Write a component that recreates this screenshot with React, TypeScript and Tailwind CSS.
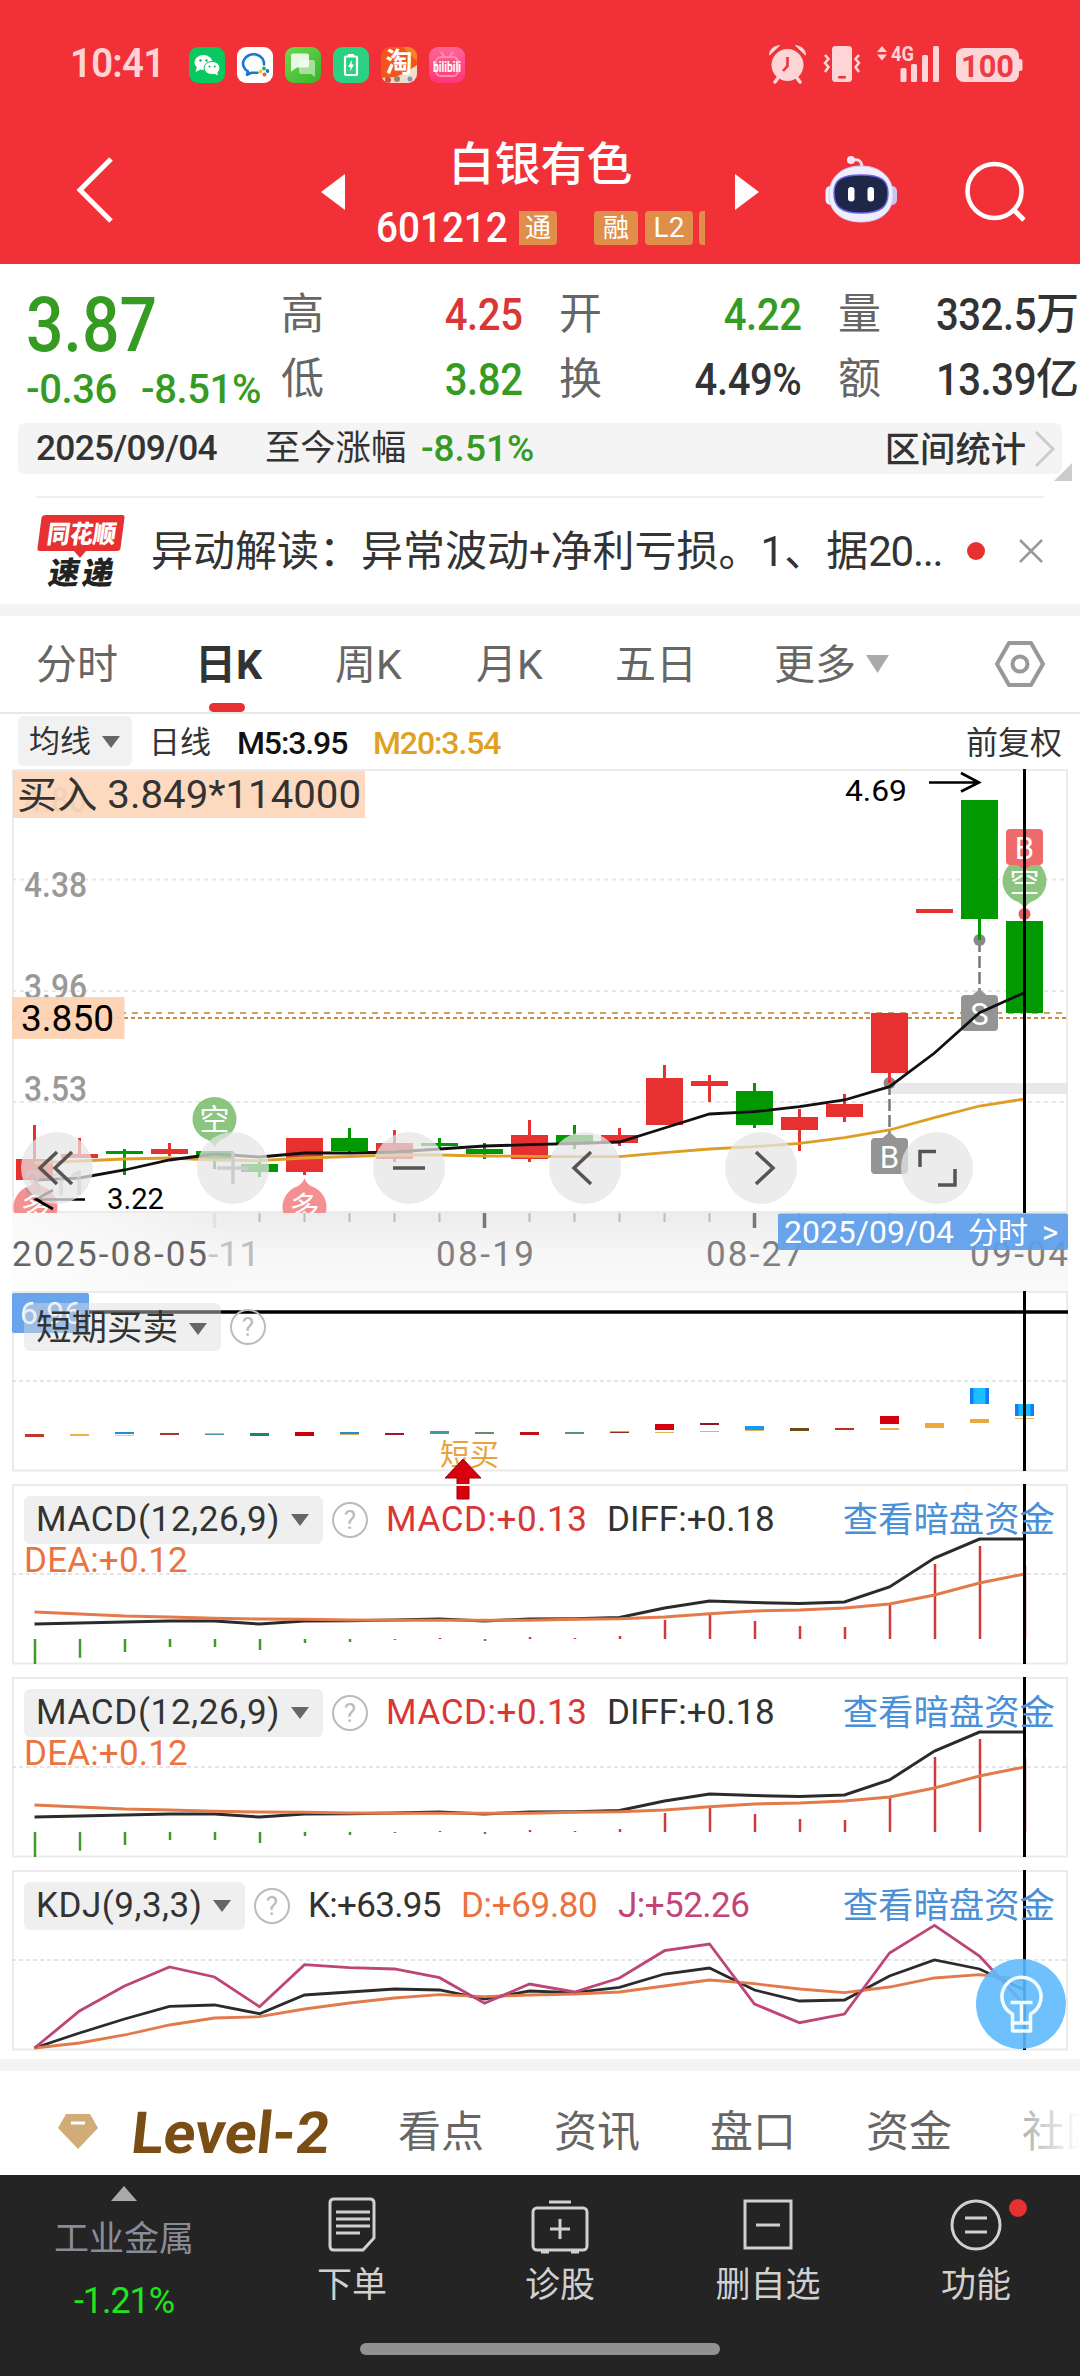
import React from 'react';
import clsx from 'clsx';

type Candle = {up: boolean; high: number; top: number; bottom: number; low: number};
type Bar = {color: string; y: number; h: number};

const FIRST_X = 34.5;
const STEP = 45;
const CURSOR_X = 1024.5;

const RED = '#e63130';
const GREEN = '#019801';

const xAt = (index: number) => FIRST_X + STEP * index;
const toPoints = (values: number[]) => values.map((y, i) => `${xAt(i)},${y}`).join(' ');

const up = (high: number, top: number, bottom: number, low: number): Candle => ({up: true, high, top, bottom, low});
const down = (high: number, top: number, bottom: number, low: number): Candle => ({up: false, high, top, bottom, low});

const candles: Candle[] = [
  up(1125, 1159, 1180, 1180),
  up(1138, 1154, 1158, 1158),
  down(1149, 1151, 1154, 1175),
  up(1143, 1149, 1154, 1156),
  down(1151, 1151, 1159, 1169),
  down(1162, 1164, 1172, 1177),
  up(1138, 1138, 1172, 1175),
  down(1128, 1138, 1151, 1153),
  up(1130, 1143, 1159, 1162),
  down(1138, 1143, 1146, 1150),
  down(1143, 1149, 1154, 1159),
  up(1120, 1135, 1159, 1162),
  down(1125, 1135, 1143, 1149),
  up(1128, 1135, 1143, 1146),
  up(1065, 1078, 1125, 1125),
  up(1075, 1081, 1086, 1102),
  down(1083, 1091, 1125, 1128),
  up(1109, 1117, 1130, 1151),
  up(1094, 1104, 1117, 1122),
  up(1013, 1013, 1073, 1083),
  up(909, 909, 913, 913),
  down(800, 800, 919, 940),
  down(921, 921, 1013, 1013),
];

const ma5 = [
  1180, 1178, 1170, 1160, 1154, 1157, 1153, 1153, 1152, 1149, 1146, 1144.7, 1143.5, 1142, 1128, 1114, 1111.7, 1106.7,
  1100, 1086.7, 1053, 1012.7, 992.7,
];
const ma20 = [
  1163, 1161, 1159, 1158, 1160, 1160.7, 1158, 1156.5, 1155, 1155, 1156, 1156.3, 1156.7, 1156.7, 1152.7, 1149, 1146.7,
  1143.3, 1137.7, 1130, 1117.7, 1106, 1099,
];

const signals: Bar[][] = [
  [{color: '#c0392b', y: 1434, h: 3}],
  [{color: '#eab04c', y: 1434, h: 2}],
  [{color: '#1f8fd0', y: 1432, h: 2}, {color: '#e8c98c', y: 1435, h: 1}],
  [{color: '#a33a28', y: 1433, h: 2}],
  [{color: '#e0b45c', y: 1433, h: 1}, {color: '#4f9aa0', y: 1434, h: 1}],
  [{color: '#1c8a5c', y: 1433, h: 3}],
  [{color: '#c8000c', y: 1432, h: 4}],
  [{color: '#1f8fd0', y: 1432, h: 2}, {color: '#d9b060', y: 1434, h: 1}],
  [{color: '#a01828', y: 1433, h: 2}],
  [{color: '#3f9aa8', y: 1431, h: 3}],
  [{color: '#5f9070', y: 1432, h: 2}],
  [{color: '#c0101c', y: 1432, h: 3}],
  [{color: '#5f9070', y: 1432, h: 2}],
  [{color: '#e0a040', y: 1431, h: 1}, {color: '#903018', y: 1432, h: 1}],
  [{color: '#d4000f', y: 1424, h: 6}, {color: '#e0b45c', y: 1432, h: 1}],
  [{color: '#8f1822', y: 1423, h: 2}, {color: '#e0b45c', y: 1431, h: 1}],
  [{color: '#129bf0', y: 1426, h: 4}, {color: '#e0b45c', y: 1430, h: 1}],
  [{color: '#6b4a1c', y: 1428, h: 3}],
  [{color: '#b5331f', y: 1428, h: 2}],
  [{color: '#d4000f', y: 1416, h: 8}, {color: '#eab04c', y: 1428, h: 2}],
  [{color: '#f0a83a', y: 1423, h: 5}],
  [{color: '#0d7cff', y: 1388, h: 16}, {color: '#eaa83f', y: 1419, h: 4}],
  [{color: '#0d7cff', y: 1404, h: 12}, {color: '#e0b45c', y: 1418, h: 1}],
];

const diff = [
  1624, 1623, 1622, 1621, 1621, 1624, 1621, 1620.7, 1620, 1619, 1621, 1619, 1618.7, 1617.5, 1608, 1601, 1602.5, 1603.5,
  1602, 1587, 1558, 1539, 1539,
];
const dea = [
  1612, 1614, 1616, 1617, 1618.3, 1619, 1619.3, 1620, 1620.3, 1620.3, 1620.3, 1620.3, 1619.3, 1618.7, 1617, 1613.7,
  1611, 1610, 1608, 1604, 1595, 1583, 1574,
];
const macdBase = 1639;
const macd = [
  1664, 1657.7, 1652, 1647, 1647, 1650, 1643, 1642, 1640, 1638, 1641, 1637, 1638, 1636, 1620, 1615, 1621, 1626, 1627,
  1605, 1564, 1546, 1566,
];

const kLine = [
  2048, 2033, 2019, 2006.3, 2005, 2013.7, 1995, 1992, 1989, 1990, 1999, 1991, 1992.7, 1987.3, 1974, 1968, 1990, 2001,
  2000, 1976, 1960, 1969, 1990,
];
const dLine = [
  2048, 2043, 2035, 2025, 2018, 2016.7, 2009, 2003, 1998, 1994.7, 1996.7, 1995, 1994, 1992, 1986, 1980, 1983.7, 1989,
  1992.7, 1987, 1978, 1974.7, 1980,
];
const jLine = [
  2048, 2011, 1986, 1967, 1977, 2006.7, 1964.7, 1967.7, 1969, 1977.7, 2003.3, 1984, 1992, 1978, 1950.7, 1944, 2004,
  2022.7, 2014, 1953, 1925.3, 1956, 2005,
];

function StatusBar() {
  return (
    <div className="flex h-[130px] items-start pt-[47px] pl-[70px]">
      <span className="w-[119px] origin-left scale-x-[0.96] text-[40px] leading-[34px] font-semibold tracking-[-0.02em] text-[#ffd3d5]">
        10:41
      </span>
      <svg className="shrink-0" width="276" height="36" viewBox="0 0 276 36">
        <defs>
          <linearGradient id="message" x1="0" y1="0" x2="1" y2="1">
            <stop offset="0" stopColor="#6fd84f" />
            <stop offset="1" stopColor="#35b52a" />
          </linearGradient>
          <linearGradient id="bili" x1="0" y1="0" x2="0" y2="1">
            <stop offset="0" stopColor="#ff6699" />
            <stop offset="1" stopColor="#ff3578" />
          </linearGradient>
          <clipPath id="taobao">
            <rect x="192" width="36" height="36" rx="9" />
          </clipPath>
        </defs>
        <rect width="36" height="36" rx="9" fill="#07c95f" />
        <ellipse cx="14.5" cy="15.5" rx="9" ry="7.6" fill="#fff" />
        <path d="M8 20l-1.5 5 5-2.5z" fill="#fff" />
        <ellipse cx="23" cy="21" rx="8" ry="6.6" fill="#fff" stroke="#07c95f" strokeWidth="1" />
        <path d="M24 26l5 2.5-1-4z" fill="#fff" />
        <circle cx="11.5" cy="13.5" r="1.2" fill="#07b055" />
        <circle cx="17.5" cy="13.5" r="1.2" fill="#07b055" />
        <circle cx="20.5" cy="19.5" r="1" fill="#07b055" />
        <circle cx="25.8" cy="19.5" r="1" fill="#07b055" />

        <rect x="48" width="36" height="36" rx="9" fill="#fff" />
        <path
          d="M75 17.500a10.500 9.300 0 1 0-16 7l-1 3.200 4.500-1.900 6 0"
          fill="none"
          stroke="#1677d2"
          strokeWidth="2.6"
          strokeLinecap="round"
          strokeLinejoin="round"
        />
        <circle cx="75" cy="21.500" r="1.900" fill="#2cb544" />
        <circle cx="78.500" cy="24" r="1.900" fill="#1677d2" />
        <circle cx="75.500" cy="27.500" r="1.900" fill="#f0582a" />
        <circle cx="71.500" cy="24.500" r="1.900" fill="#fcc41c" />

        <rect x="96" width="36" height="36" rx="9" fill="url(#message)" />
        <path d="M110 13h14q2 0 2 2v15l-4-3h-10q-2 0-2-2z" fill="#fff" opacity=".5" />
        <path d="M104 6.500h14q2 0 2 2v10q0 2-2 2h-10l-6 4v-16q0-2 2-2z" fill="#fff" opacity=".85" />

        <rect x="144" width="36" height="36" rx="9" fill="#2bd082" />
        <rect x="156" y="9.500" width="12" height="18.500" rx="1" fill="none" stroke="#fff" strokeWidth="2.200" />
        <rect x="159" y="7" width="6" height="3" fill="#fff" />
        <path d="M163 13l-4 7h2.500l-.5 4.500 4-7h-2.500z" fill="#fff" />

        <g clipPath="url(#taobao)">
          <rect x="192" width="36" height="36" fill="#f4551a" />
          <path d="M214 0h14v14z" fill="#f9822c" />
          <path d="M192 36v-5l14-1 10-4 12-8v18z" fill="#f3dccb" />
          <circle cx="199" cy="33" r="3" fill="#d9493c" />
          <circle cx="208" cy="32" r="3" fill="#a07f62" />
          <circle cx="221" cy="32" r="2.500" fill="#8294b8" />
        </g>
        <text x="210" y="25" textAnchor="middle" fontSize="27" fontWeight="700" fill="#fff">
          淘
        </text>

        <rect x="240" width="36" height="36" rx="9" fill="url(#bili)" />
        <rect x="247" y="10" width="22" height="19" rx="5" fill="none" stroke="#ff8fb4" strokeWidth="2" />
        <path d="M252 5l3 4M264 5l-3 4" stroke="#ff8fb4" strokeWidth="2" />
        <text x="244" y="25" fontSize="14" fontWeight="700" fill="#fff" textLength="28" lengthAdjust="spacingAndGlyphs">
          bilibili
        </text>
      </svg>
      <svg className="mt-[-2px] ml-auto mr-[57px] shrink-0" width="254" height="40" viewBox="769 45 254 40" fill="#fdd5d6">
        <circle cx="787.500" cy="65" r="16" />
        <path d="M769.500 55q0-8 10-9.500zM805.500 55q0-8-10-9.500z" stroke="#fdd5d6" strokeWidth="1" />
        <path d="M778 78l-3 4M797 78l3 4" stroke="#fdd5d6" strokeWidth="3.500" strokeLinecap="round" />
        <path d="M787.500 57v9l-4.500 5" fill="none" stroke="#f13038" strokeWidth="2.600" />
        <rect x="832" y="46" width="20" height="36" rx="3.500" />
        <rect x="838" y="76" width="8" height="2.500" rx="1" fill="#f13038" />
        <path
          d="M825 55l3.500 4-3.500 4 3.500 4-3.500 5M859 55l-3.500 4 3.500 4-3.500 4 3.500 5"
          fill="none"
          stroke="#fdd5d6"
          strokeWidth="2.600"
        />
        <path d="M877 52l5-6 5 6zM877 54.500l5 6 5-6z" />
        <text x="891" y="61" fontSize="21" fontWeight="700" textLength="23" lengthAdjust="spacingAndGlyphs">
          4G
        </text>
        <rect x="900.500" y="68" width="6" height="14" rx="1.500" />
        <rect x="911" y="64" width="6" height="18" rx="1.500" />
        <rect x="922" y="55" width="6" height="27" rx="1.500" />
        <rect x="933" y="46" width="6" height="36" rx="1.500" />
        <rect x="956" y="48" width="63" height="34" rx="8" />
        <path d="M1019 59h1.500q2 0 2 2v8q0 2-2 2h-1.500z" />
        <text
          x="961"
          y="76.500"
          fontSize="31"
          fontWeight="700"
          fill="#ee3a42"
          textLength="53"
          lengthAdjust="spacingAndGlyphs"
        >
          100
        </text>
      </svg>
    </div>
  );
}

function Robot() {
  return (
    <svg className="ml-[66px]" width="72" height="72" viewBox="825 155 72 72">
      <path d="M853 160q9-2 9 8" fill="none" stroke="#f5dfe8" strokeWidth="3" />
      <circle cx="851" cy="160" r="4" fill="#f3e6f4" />
      <rect x="825.500" y="186" width="10" height="19" rx="5" fill="#f2f2fb" />
      <rect x="887" y="186" width="10" height="19" rx="5" fill="#c9c4f4" />
      <path
        d="M861 166c20 0 32 12 32 29s-13 27-32 27-32-10-32-27 12-29 32-29z"
        fill="#efeefc"
        stroke="#cfcdf5"
        strokeWidth="1"
      />
      <path
        d="M861 175c20 0 27 5 27 18s-6 20-27 20-27-7-27-20 7-18 27-18z"
        fill="#1e2748"
        stroke="#6a63e8"
        strokeWidth="1.500"
      />
      <rect x="848" y="187" width="6.500" height="14.500" rx="3.200" fill="#fff" />
      <rect x="867.500" y="187" width="6.500" height="14.500" rx="3.200" fill="#fff" />
    </svg>
  );
}

function Header() {
  return (
    <header className="h-[264px] bg-[#f13038]">
      <StatusBar />
      <div className="flex h-[134px] items-start">
        <svg className="mt-[22px] ml-[72px]" width="44" height="74" viewBox="72 152 44 74">
          <path d="M111 159l-31 31 31 31" fill="none" stroke="#fff" strokeWidth="5" />
        </svg>
        <svg className="mt-11 ml-[205px]" width="24" height="36" viewBox="0 0 24 36">
          <path d="M24 0v36L0 18z" fill="#fff" />
        </svg>
        <div className="ml-[31px] flex w-[329px] flex-col items-center">
          <h1 className="mt-[9px] text-[46px] leading-[50px] font-medium text-white">白银有色</h1>
          <div className="mt-[22px] flex h-[34px] w-full items-center">
            <span className="w-[143px] origin-left scale-x-[0.92] text-[42px] leading-[34px] font-medium text-white">
              601212
            </span>
            <span className="flex h-[34px] w-[38px] items-center justify-center rounded-r bg-[#e08f4b] text-[26px] text-white">
              通
            </span>
            <span className="ml-[37px] flex h-[34px] w-11 items-center justify-center rounded bg-[#e08f4b] text-[26px] text-white">
              融
            </span>
            <span className="ml-[7px] flex h-[34px] w-12 items-center justify-center rounded bg-[#e08f4b] text-[28px] text-white">
              L2
            </span>
            <span className="ml-[6px] h-[34px] w-[6px] rounded-l bg-[#e08f4b]" />
          </div>
        </div>
        <svg className="mt-11 ml-[30px]" width="24" height="36" viewBox="0 0 24 36">
          <path d="M0 0v36l24-18z" fill="#fff" />
        </svg>
        <div className="mt-[25px]">
          <Robot />
        </div>
        <svg className="mt-[30px] ml-[66px]" width="66" height="66" viewBox="963 160 66 66">
          <circle cx="994.500" cy="191" r="27" fill="none" stroke="#fff" strokeWidth="4.500" />
          <path d="M1013 209l11 11" stroke="#fff" strokeWidth="5" />
        </svg>
      </div>
    </header>
  );
}

type StatProps = {label: string; value: string; unit?: string; tone?: string};

function Stat({label, value, unit, tone = 'text-[#333]'}: StatProps) {
  return (
    <div className="flex h-[65px] items-center justify-between">
      <span className="text-[43px] text-[#666]">{label}</span>
      <span className={clsx('flex text-[44px] font-medium tracking-[-0.01em]', tone)}>
        <span className="origin-right scale-x-[0.91]">{value}</span>
        {unit && <span className="text-[43px] tracking-normal">{unit}</span>}
      </span>
    </div>
  );
}

function Quote() {
  return (
    <section className="h-[232px] bg-white">
      <div className="flex h-[159px] pt-[18px]">
        <div className="w-[281px] shrink-0 pl-[26px] text-[#369b22]">
          <div className="mt-[7px] origin-left scale-x-[0.87] text-[76px] leading-[72px] font-medium">3.87</div>
          <div className="mt-[9px] flex text-[40px] leading-[40px] font-medium tracking-[-0.01em]">
            <span className="w-[115px]">-0.36</span>
            <span>-8.51%</span>
          </div>
        </div>
        <div className="w-[241px]">
          <Stat label="高" value="4.25" tone="text-[#d93636]" />
          <Stat label="低" value="3.82" tone="text-[#369b22]" />
        </div>
        <div className="ml-[37px] w-[242px]">
          <Stat label="开" value="4.22" tone="text-[#369b22]" />
          <Stat label="换" value="4.49%" />
        </div>
        <div className="ml-[37px] w-[241px]">
          <Stat label="量" value="332.5" unit="万" />
          <Stat label="额" value="13.39" unit="亿" />
        </div>
      </div>
      <div className="relative mr-[18px] ml-[18px] flex h-[51px] items-center rounded-md bg-[#f4f4f4] pl-[18px] text-[35.300px] text-[#333]">
        <span className="w-[229px] font-medium tracking-[-0.02em]">2025/09/04</span>
        <span className="w-[156px]">至今涨幅</span>
        <span className="text-[37px] font-medium text-[#369b22]">-8.51%</span>
        <span className="mt-1 ml-auto font-medium">区间统计</span>
        <svg className="mr-[6px] ml-2" width="22" height="40" viewBox="0 0 22 40">
          <path d="M2 3l17 17L2 37" fill="none" stroke="#ccc" strokeWidth="3" />
        </svg>
        <svg className="absolute right-[-10px] bottom-[-7px]" width="18" height="18" viewBox="0 0 18 18">
          <path d="M18 0v18H0z" fill="#ccc" />
        </svg>
      </div>
    </section>
  );
}

function News() {
  return (
    <section className="bg-white">
      <div className="mx-9 flex h-[108px] items-center border-t-2 border-[#eee]">
        <svg width="90" height="74" viewBox="36 513 90 74">
          <path
            d="M46 514h76q3 0 2.500 3l-4 30q-.5 3-3.500 3h-31l-6 7-6-7H40q-3 0-2.500-3l4-30q.5-3 4.500-3z"
            fill="#e63130"
          />
          <text
            transform="translate(46 542) skewX(-8)"
            fontSize="25"
            fontWeight="900"
            fill="#fff"
            textLength="69"
            lengthAdjust="spacingAndGlyphs"
          >
            同花顺
          </text>
          <text transform="translate(47 583) skewX(-10)" fontSize="31" fontWeight="900" fill="#222" textLength="65">
            速递
          </text>
        </svg>
        <span className="ml-[25px] w-[796px] origin-left text-[42px] whitespace-nowrap text-[#333]">
          异动解读：异常波动<span className="text-[38px]">+</span>净利亏损。1、据
          <span className="tracking-[-0.03em]">20...</span>
        </span>
        <span className="ml-[20px] size-[18px] shrink-0 rounded-full bg-[#e63130]" />
        <svg className="ml-auto" width="26" height="26" viewBox="0 0 26 26">
          <path d="M2 2l22 22M24 2L2 24" stroke="#999" strokeWidth="2.500" />
        </svg>
      </div>
      <div className="h-3 bg-[#f4f4f4]" />
    </section>
  );
}

const Triangle = ({className}: {className: string}) => (
  <svg className={className} viewBox="0 0 18 12" preserveAspectRatio="none">
    <path d="M0 0h18L9 12z" fill="currentColor" />
  </svg>
);

const periods = [
  {name: '分时', width: 'w-[159px]'},
  {name: '日K', width: 'w-[140px]', active: true},
  {name: '周K', width: 'w-[141px]'},
  {name: '月K', width: 'w-[139px]'},
  {name: '五日', width: 'w-[159px]'},
  {name: '更多', width: 'w-[92px]'},
];

function PeriodTabs() {
  return (
    <nav className="flex h-[98px] items-center border-b-2 border-[#e8e8e8] bg-white pl-9 text-[41px] text-[#666]">
      {periods.map(({name, width, active}) => (
        <span
          key={name}
          className={clsx('relative flex h-full items-center pt-1', width, active && 'font-bold text-[#333]')}
        >
          {name}
          {active && <span className="absolute bottom-0 left-[14px] h-[9px] w-9 rounded-full bg-[#e63130]" />}
        </span>
      ))}
      <Triangle className="h-[18px] w-[23px] text-[#aaa]" />
      <svg className="ml-[106px]" width="50" height="46" viewBox="0 0 50 46">
        <path d="M14 2h22l12 21-12 21H14L2 23z" fill="none" stroke="#999" strokeWidth="4" strokeLinejoin="round" />
        <circle cx="25" cy="23" r="7.500" fill="none" stroke="#999" strokeWidth="4" />
      </svg>
    </nav>
  );
}

function AverageBar() {
  return (
    <div className="flex h-[55px] items-start bg-white pt-[2px] pl-[18px] text-[31px] text-[#333]">
      <span className="flex h-[50px] w-[114px] items-center rounded-md bg-[#f1f1f1] pt-[2px] pl-[11px]">
        均线
        <Triangle className="ml-[11px] h-3 w-[18px] text-[#666]" />
      </span>
      <span className="flex h-[54px] flex-1 items-center pl-[17px] font-medium">
        <span className="w-[88px] font-normal">日线</span>
        <span className="w-[136px] text-[32px] tracking-[-0.035em] text-[#111]">M5:3.95</span>
        <span className="text-[32px] tracking-[-0.035em] text-[#e0a020]">M20:3.54</span>
        <span className="mr-[18px] ml-auto text-[32px] font-normal">前复权</span>
      </span>
    </div>
  );
}

type MarkProps = {x: number; y: number; text: string; color: string; flip?: boolean};

// round pin with a tail, pointing down unless flipped
function Pin({x, y, text, color, flip}: MarkProps) {
  return (
    <g transform={`translate(${x} ${y})`} opacity=".9">
      <path
        transform={flip ? 'scale(1 -1)' : undefined}
        d="M0 29q-2-7-10-9.500A22 22 0 1 1 10 19.500Q2 22 0 29z"
        fill={color}
      />
      <text y="11" textAnchor="middle" fontSize="30" fill="#fff">
        {text}
      </text>
    </g>
  );
}

function Flag({x, y, text, color, flip}: MarkProps) {
  return (
    <g transform={`translate(${x} ${y})`}>
      <rect x="-18.500" y="-18" width="37" height="36" rx="4" fill={color} />
      <path d={flip ? 'M-7-18l7-6 7 6z' : 'M-7 18l7 5 7-5z'} fill={color} />
      <text y="11.500" textAnchor="middle" fontSize="31" fill="#fff">
        {text}
      </text>
    </g>
  );
}

const controls = [
  'M57 1152l-17 16 17 16M72 1152l-17 16 17 16',
  'M217 1168h32M233 1152v32',
  'M393 1168h32',
  'M591 1152l-17 16 17 16',
  'M756 1152l17 16-17 16',
  'M920 1167v-15.500h16M955 1169v16h-17',
];

const priceLabels: [string, number][] = [
  ['4.80', 812],
  ['4.38', 897],
  ['3.96', 999],
  ['3.53', 1101],
  ['3.11', 1195],
];

function PriceChart() {
  return (
    <svg className="block" width="1080" height="522" viewBox="0 769 1080 522">
      <defs>
        <linearGradient id="axis" x1="0" y1="0" x2="0" y2="1">
          <stop offset="0" stopColor="#ececec" />
          <stop offset=".5" stopColor="#f6f6f6" />
          <stop offset="1" stopColor="#fafafa" />
        </linearGradient>
        <linearGradient id="fadeLeft" x1="0" y1="0" x2="1" y2="0">
          <stop offset="0" stopColor="#fff" />
          <stop offset=".5" stopColor="#f9f9f9" stopOpacity=".9" />
          <stop offset="1" stopColor="#f6f6f6" stopOpacity="0" />
        </linearGradient>
        <clipPath id="plot">
          <rect x="12" y="769" width="1056" height="444" />
        </clipPath>
      </defs>

      <rect x="12" y="1212" width="1056" height="79" fill="url(#axis)" />
      <path d="M13 1212V770h1054v442z" fill="none" stroke="#ebebeb" strokeWidth="2" />
      <path d="M12 879.500h1056M12 991h1056M12 1102h1056" stroke="#e8e8e8" strokeWidth="2" strokeDasharray="4 4" />

      <rect x="889" y="1083" width="179" height="11" fill="#e8e8e8" />
      <path d="M12 1013h1056" stroke="#c9a268" strokeWidth="2" strokeDasharray="6 6" />
      <path d="M12 1018h1056" stroke="#c98a3c" strokeWidth="2" strokeDasharray="4 3" />

      <g clipPath="url(#plot)">
        <path d="M979.500 940v52M889.500 1083v52" stroke="#777" strokeWidth="2.500" strokeDasharray="12 4" />
        <circle cx="979.500" cy="940" r="6" fill="#888" />
        <circle cx="889.500" cy="1083" r="6" fill="#888" />
        {candles.map((candle, i) => (
          <g key={i} fill={candle.up ? RED : GREEN}>
            <rect x={xAt(i) - 1.5} y={candle.high} width="3" height={candle.low - candle.high} />
            <rect x={xAt(i) - 18.5} y={candle.top} width="37" height={candle.bottom - candle.top} />
          </g>
        ))}
        <Pin x={214.5} y={1119} text="空" color="#80bf72" />
        <Pin x={35.5} y={1207} text="多" color="#f58585" flip />
        <Pin x={304.5} y={1207} text="多" color="#f58585" flip />
        <Flag x={979.5} y={1013} text="S" color="#949494" flip />
        <Flag x={889.5} y={1156} text="B" color="#949494" flip />
        <Pin x={CURSOR_X} y={881} text="空" color="#80bf72" />
        <Flag x={CURSOR_X} y={847} text="B" color="#ef6a6a" />
        <circle cx={CURSOR_X} cy="914" r="6" fill="#e06060" />
        <polyline points={toPoints(ma20)} fill="none" stroke="#dc9e24" strokeWidth="2.800" />
        <polyline points={toPoints(ma5)} fill="none" stroke="#111" strokeWidth="2.800" />
      </g>
      {priceLabels.map(([label, y]) => (
        <text
          key={label}
          x="24"
          y={y}
          fontSize="35"
          fontWeight="500"
          fill="#999"
          opacity={y > 1100 && y !== 1101 ? 0.6 : 1}
          textLength="63"
          lengthAdjust="spacingAndGlyphs"
        >
          {label}
        </text>
      ))}
      <path d={`M${CURSOR_X} 769v444`} stroke="#000" strokeWidth="3" />

      <rect x="13" y="771" width="352" height="47" fill="#fdd6b8" opacity=".9" />
      <text x="17" y="808" fontSize="38" fill="#333" textLength="344" lengthAdjust="spacingAndGlyphs">
        买入 3.849*114000
      </text>
      <rect x="12" y="997" width="112.500" height="42" fill="#fdd2b2" opacity=".95" />
      <text x="21" y="1030.500" fontSize="36" fill="#000" textLength="93" lengthAdjust="spacingAndGlyphs">
        3.850
      </text>

      <text x="845" y="800.500" fontSize="30" textLength="62" lengthAdjust="spacingAndGlyphs">
        4.69
      </text>
      <path d="M929 782.500h50M961 773l18 9.500-18 9" fill="none" stroke="#000" strokeWidth="2.600" />
      <text x="107" y="1209" fontSize="30" textLength="57" lengthAdjust="spacingAndGlyphs">
        3.22
      </text>
      <path d="M85 1199.500H36M53 1190l-17 9.500 17 9.500" fill="none" stroke="#000" strokeWidth="2.600" />

      {controls.map((d, i) => (
        <g key={d}>
          <circle cx={57 + 176 * i} cy="1168" r="36" fill="#e6e6e6" opacity=".74" />
          <path d={d} fill="none" stroke={i === 1 ? '#ccc' : '#555'} strokeWidth="3.500" />
        </g>
      ))}

      {candles.slice(4, 22).map((_, i) => (
        <path
          key={i}
          d={`M${xAt(i + 4)} 1213v${i % 6 === 0 ? 15 : 9}`}
          stroke={i === 0 ? '#ddd' : i % 6 === 0 ? '#777' : '#bbb'}
          strokeWidth={i % 6 === 0 ? 3.5 : 2}
        />
      ))}
      <g fontSize="35" fill="#808080">
        <text x="208" y="1266" fill="#bbb" textLength="52" lengthAdjust="spacingAndGlyphs">
          -11
        </text>
        <rect x="12" y="1213" width="240" height="78" fill="url(#fadeLeft)" opacity=".7" />
        <text x="12" y="1266" fill="#666" textLength="195">
          2025-08-05
        </text>
        <text x="436" y="1266" textLength="98">
          08-19
        </text>
        <text x="706" y="1266" textLength="97">
          08-27
        </text>
        <text x="970" y="1266" textLength="98">
          09-04
        </text>
      </g>
      <rect x="778" y="1213.500" width="290" height="36.500" rx="2" fill="#5d9eec" opacity=".93" />
      <text x="784" y="1243" fontSize="31" fill="#fff" textLength="170" lengthAdjust="spacingAndGlyphs">
        2025/09/04
      </text>
      <text x="968" y="1243" fontSize="30" fill="#fff" textLength="60" lengthAdjust="spacingAndGlyphs">
        分时
      </text>
      <text x="1042" y="1243" fontSize="31" fill="#fff">
        &gt;
      </text>
    </svg>
  );
}

type PanelProps = {
  top: number;
  name: string;
  nameWidth: string;
  link?: boolean;
  values?: React.ReactNode;
  second?: React.ReactNode;
  dash: number;
  under?: React.ReactNode;
  children: React.ReactNode;
};

function Panel({top, name, nameWidth, link, values, second, dash, under, children}: PanelProps) {
  return (
    <section className="relative mb-[13px] h-[180px] text-[35px] whitespace-nowrap">
      <svg className="absolute inset-0 overflow-visible" width="1080" height="180" viewBox={`0 ${top} 1080 180`}>
        <rect x="13" y={top + 1} width="1054" height="178.500" fill="none" stroke="#ebebeb" strokeWidth="2" />
        <path d={`M12 ${dash}h1056`} stroke="#ddd" strokeWidth="1.500" strokeDasharray="4 3" />
        {under}
        {children}
        <path d={`M${CURSOR_X} ${top}v180`} stroke="#000" strokeWidth="3" />
      </svg>
      <div className="relative flex h-[60px] items-center pt-3 pr-[25px] pl-[24px]">
        <span
          className={clsx(
            'flex h-12 items-center justify-between rounded-md bg-[#dcdcdc]/45 pr-[14px] pl-3 text-[#333]',
            nameWidth,
          )}
        >
          {name}
          <Triangle className="h-3 w-[18px] text-[#666]" />
        </span>
        <span className="mr-[18px] ml-[9px] flex size-[36px] items-center justify-center rounded-full border-[2.5px] border-[#bbb] text-[26px] text-[#bbb]">
          ?
        </span>
        {values}
        {link && <span className="ml-auto text-[35.4px] leading-[48px] text-[#4a90d9]">查看暗盘资金</span>}
      </div>
      {second && <div className="relative pl-[24px] leading-[34px]">{second}</div>}
    </section>
  );
}

function SignalPanel() {
  return (
    <Panel
      top={1291}
      name="短期买卖"
      nameWidth="w-[197px] text-[35.5px] pt-1"
      dash={1381}
      under={
        <>
          <rect x="12" y="1293" width="77" height="40" rx="2" fill="#5d9eec" opacity=".93" />
          <text x="20" y="1324" fontSize="31" fill="#fff" textLength="62" lengthAdjust="spacingAndGlyphs">
            6.96
          </text>
          <path d="M89 1312h979" stroke="#000" strokeWidth="3.500" />
        </>
      }
    >
      {signals.map((bars, i) =>
        bars.map((bar) => (
          <rect key={`${i}-${bar.y}`} x={xAt(i) - 9.5} y={bar.y} width="19" height={bar.h} fill={bar.color} />
        )),
      )}
      <rect x={xAt(21) - 6} y="1388" width="12" height="16" fill="#1fbcff" />
      <rect x={xAt(22) - 6} y="1404" width="12" height="12" fill="#1fbcff" />
      <text x="440" y="1465" fontSize="29.500" fill="#e8a33a">
        短买
      </text>
      <path d="M463 1459l18 19h-12v21h-12v-21h-12z" fill="#d8000c" stroke="#9b0008" strokeWidth="1" />
    </Panel>
  );
}

function MacdPanel({offset = 0}: {offset?: number}) {
  const shift = (values: number[]) => values.map((value) => value + offset);

  return (
    <Panel
      top={1484 + offset}
      name="MACD(12,26,9)"
      nameWidth="w-[299px] tracking-[0.019em]"
      link
      dash={1574 + offset}
      values={
        <>
          <span className="w-[221px] tracking-[0.016em] text-[#d93636]">MACD:+0.13</span>
          <span className="text-[#333]">DIFF:+0.18</span>
        </>
      }
      second={<span className="tracking-[0.005em] text-[#eb7340]">DEA:+0.12</span>}
    >
      {shift(macd).map((y, i) => (
        <path
          key={i}
          d={`M${xAt(i) + 0.5} ${macdBase + offset}V${y}`}
          stroke={y > macdBase + offset ? '#3f9a2c' : '#cf3a3a'}
          strokeWidth="2.500"
        />
      ))}
      <polyline points={toPoints(shift(diff))} fill="none" stroke="#2b2b2b" strokeWidth="3" />
      <polyline points={toPoints(shift(dea))} fill="none" stroke="#e27a4c" strokeWidth="3" />
    </Panel>
  );
}

function KdjPanel() {
  return (
    <Panel
      top={1870}
      name="KDJ(9,3,3)"
      nameWidth="w-[221px] tracking-[0.015em]"
      link
      dash={1960}
      values={
        <>
          <span className="w-[153px] tracking-[-0.02em] text-[#333]">K:+63.95</span>
          <span className="w-[157px] tracking-[-0.01em] text-[#eb7340]">D:+69.80</span>
          <span className="tracking-[-0.015em] text-[#c4447a]">J:+52.26</span>
        </>
      }
    >
      <polyline points={toPoints(kLine)} fill="none" stroke="#2b2b2b" strokeWidth="2.800" />
      <polyline points={toPoints(dLine)} fill="none" stroke="#e27a4c" strokeWidth="2.800" />
      <polyline points={toPoints(jLine)} fill="none" stroke="#bd4577" strokeWidth="2.800" />
    </Panel>
  );
}

function TipButton() {
  return (
    <svg className="absolute top-[1959px] left-[976px]" width="90" height="90" viewBox="0 0 90 90">
      <circle cx="45" cy="45" r="45" fill="#5ebafd" opacity=".9" />
      <path
        d="M36.500 55a19.500 19.500 0 1 1 18 0v17h-18zM36.500 64h18M45.500 64V44M34.500 43.500h22"
        fill="none"
        stroke="#f2fdff"
        strokeWidth="3.500"
        strokeLinejoin="round"
      />
    </svg>
  );
}

function InfoTabs() {
  return (
    <nav className="relative flex h-[104px] items-center overflow-hidden bg-white pt-[19px] text-[43px] whitespace-nowrap text-[#666]">
      <svg className="mt-[-2px] ml-[57px] shrink-0" width="42" height="38" viewBox="0 0 42 38">
        <path d="M9 1h24l8 14-20 21L1 15z" fill="#d2ac78" />
        <path d="M14 10h14" stroke="#fff" strokeWidth="3" />
      </svg>
      <span className="ml-[33px] w-[266px] shrink-0 text-[58px] leading-[60px] font-bold text-[#7a4d14]">
        <span className="inline-block origin-left scale-x-[1.02] -skew-x-6">Level-2</span>
      </span>
      <span className="w-[156px] shrink-0">看点</span>
      <span className="w-[156px] shrink-0">资讯</span>
      <span className="w-[156px] shrink-0">盘口</span>
      <span className="w-[156px] shrink-0">资金</span>
      <span className="shrink-0">社区</span>
      <span className="absolute top-0 right-0 h-full w-20 bg-linear-to-r from-white/30 to-white" />
    </nav>
  );
}

const actions = [
  {
    name: '下单',
    icon: (
      <>
        <path d="M7 4h36q4 0 4 4v35L36 55H7q-4 0-4-4V8q0-4 4-4z" />
        <path d="M9 17h34M9 24h34M9 31h34M9 38h24" />
      </>
    ),
  },
  {
    name: '诊股',
    icon: (
      <>
        <rect x="-2" y="13" width="54" height="42" rx="4" />
        <path d="M14 7h22M25 24v20M15 34h20M6 57h8M36 57h8" />
      </>
    ),
  },
  {
    name: '删自选',
    icon: (
      <>
        <rect x="2" y="6" width="46" height="47" />
        <path d="M13 30h24" />
      </>
    ),
  },
  {
    name: '功能',
    icon: (
      <>
        <circle cx="25" cy="30" r="24" />
        <path d="M14 23h22M14 37h22" />
      </>
    ),
    dot: true,
  },
];

function BottomBar() {
  return (
    <footer className="flex h-[201px] flex-col items-center bg-[#242424]">
      <div className="flex h-[168px] w-full">
        <div className="flex w-[248px] flex-col items-center pt-[11px]">
          <svg width="26" height="15" viewBox="0 0 26 15">
            <path d="M13 0l13 15H0z" fill="#aaa" />
          </svg>
          <span className="mt-[19px] text-[35px] leading-[40px] text-[#8a8b98]">工业金属</span>
          <span className="mt-[21px] text-[36px] leading-[40px] tracking-[-0.03em] text-[#1ee51e]">-1.21%</span>
        </div>
        {actions.map(({name, icon, dot}) => (
          <div key={name} className="relative flex w-52 flex-col items-center pt-5 text-[35px] text-[#d0d0d0]">
            <svg
              className="overflow-visible"
              width="50"
              height="60"
              viewBox="0 0 50 60"
              fill="none"
              stroke="#d0d0d0"
              strokeWidth="3"
            >
              {icon}
            </svg>
            <span className="mt-[11px] leading-[40px]">{name}</span>
            {dot && <span className="absolute top-6 left-[137px] size-[18px] rounded-full bg-[#e63130]" />}
          </div>
        ))}
      </div>
      <div className="h-3 w-[360px] rounded-full bg-[#919191]" />
    </footer>
  );
}

export default function App() {
  return (
    <main className="relative h-[2376px] w-[1080px] overflow-hidden bg-white font-[Roboto,'Noto_Sans_CJK_SC',sans-serif]">
      <Header />
      <Quote />
      <News />
      <PeriodTabs />
      <AverageBar />
      <PriceChart />
      <SignalPanel />
      <MacdPanel />
      <MacdPanel offset={193} />
      <KdjPanel />
      <div className="mt-[-4px] h-3 bg-[#f4f4f4]" />
      <InfoTabs />
      <BottomBar />
      <TipButton />
    </main>
  );
}
